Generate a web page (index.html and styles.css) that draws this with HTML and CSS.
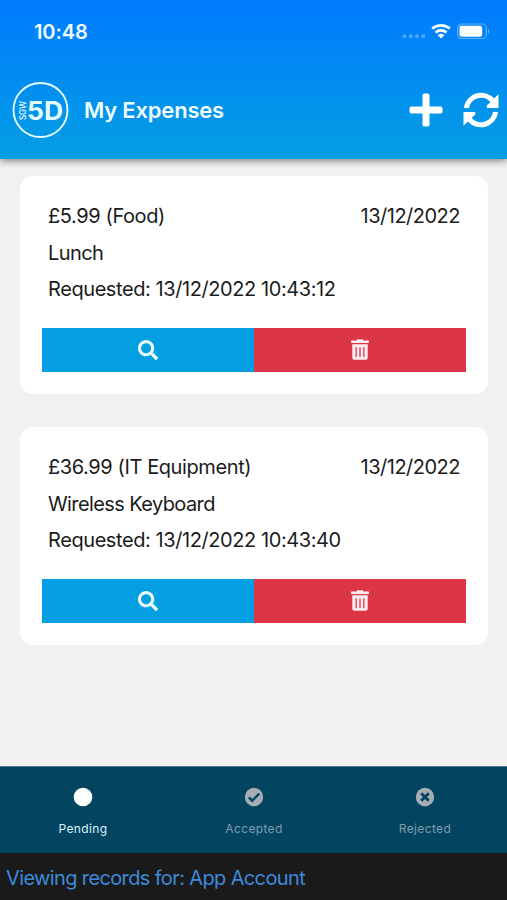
FILE: index.html
```html
<!DOCTYPE html>
<html lang="en">
<head>
<meta charset="utf-8">
<title>My Expenses</title>
<link rel="stylesheet" href="styles.css">
</head>
<body>
<svg class="defs" aria-hidden="true">
  <symbol id="search" viewBox="0 0 512 512"><path d="M505 442.700 405.300 343c-4.500-4.500-10.600-7-17-7H372c27.600-35.300 44-79.700 44-128C416 93.100 322.900 0 208 0S0 93.100 0 208s93.100 208 208 208c48.300 0 92.700-16.400 128-44v16.300c0 6.400 2.500 12.500 7 17l99.700 99.700c9.400 9.400 24.600 9.400 33.900 0l28.300-28.300c9.400-9.400 9.400-24.600.1-34zM208 336c-70.700 0-128-57.200-128-128 0-70.700 57.200-128 128-128 70.700 0 128 57.200 128 128 0 70.700-57.200 128-128 128z"/></symbol>
  <symbol id="trash" viewBox="0 0 448 512"><path d="M32 464a48 48 0 0 0 48 48h288a48 48 0 0 0 48-48V128H32zm272-256a16 16 0 0 1 32 0v224a16 16 0 0 1-32 0zm-96 0a16 16 0 0 1 32 0v224a16 16 0 0 1-32 0zm-96 0a16 16 0 0 1 32 0v224a16 16 0 0 1-32 0zM432 32H312l-9.400-18.700A24 24 0 0 0 281.100 0H166.800a23.700 23.700 0 0 0-21.400 13.300L136 32H16A16 16 0 0 0 0 48v32a16 16 0 0 0 16 16h416a16 16 0 0 0 16-16V48a16 16 0 0 0-16-16z"/></symbol>
</svg>
<header class="header">
  <div class="status">
    <span class="time">10:48</span>
    <svg class="indicators" width="90" height="22" viewBox="0 0 90 22">
      <g fill="#fff" opacity=".3"><circle cx="4.500" cy="15.300" r="2"/><circle cx="10.800" cy="15.300" r="2"/><circle cx="17" cy="15.300" r="2"/><circle cx="23.300" cy="15.300" r="2"/></g>
      <g transform="translate(0 -1)">
        <g fill="none" stroke="#fff" stroke-width="2.700"><path d="M32.200 8.600a13.400 13.400 0 0 1 17.600 0"/><path d="M35.500 12.500a8.300 8.300 0 0 1 11 0"/></g>
        <path fill="#fff" d="m41 18.500-3.300-3.300a5 5 0 0 1 6.600 0z"/>
        <rect x="57.700" y="4" width="28.600" height="14.500" rx="4" fill="none" stroke="#fff" stroke-opacity=".4" stroke-width="1.200"/>
        <rect x="59.500" y="5.800" width="22.700" height="11" rx="2.200" fill="#fff"/>
        <path d="M88 8.700q2 2.500 0 5z" fill="#fff" opacity=".5"/>
      </g>
    </svg>
  </div>
  <div class="titlebar">
    <svg class="logo" width="58" height="58" viewBox="0 0 58 58">
      <circle cx="28.500" cy="29" r="27" fill="none" stroke="#e4fbff" stroke-width="1.900"/>
      <text class="logo-side" transform="translate(14.300 39) rotate(-90)" textLength="19" lengthAdjust="spacingAndGlyphs">SGW</text>
      <text class="logo-main" x="15" y="38.500" textLength="36" lengthAdjust="spacingAndGlyphs">5D</text>
    </svg>
    <h1 class="title">My Expenses</h1>
    <svg class="add" width="34" height="34" viewBox="0 0 34 34"><path fill="#fff" d="M15.500.5h3a2 2 0 0 1 2 2v11h11a2 2 0 0 1 2 2v3a2 2 0 0 1-2 2h-11v11a2 2 0 0 1-2 2h-3a2 2 0 0 1-2-2v-11h-11a2 2 0 0 1-2-2v-3a2 2 0 0 1 2-2h11v-11a2 2 0 0 1 2-2z"/></svg>
    <svg class="sync" width="36" height="36" viewBox="0 0 36 36"><g id="arc"><path fill="none" stroke="#fff" stroke-width="5.200" d="M3.400 16A14.900 14.900 0 0 1 29.500 8.500"/><path fill="#fff" d="M35.500 2.200V16H23.800v-2.500z"/></g><use href="#arc" transform="rotate(180 18 18)"/></svg>
  </div>
</header>
<main class="list">
  <article class="card">
    <div class="row"><span>£5.99 (Food)</span><span class="date">13/12/2022</span></div>
    <div class="row"><span>Lunch</span></div>
    <div class="row"><span class="requested">Requested: 13/12/2022 10:43:12</span></div>
    <div class="actions">
      <button class="view" aria-label="View"><svg width="20" height="20"><use href="#search"/></svg></button>
      <button class="delete" aria-label="Delete"><svg width="18" height="21"><use href="#trash"/></svg></button>
    </div>
  </article>
  <article class="card">
    <div class="row"><span>£36.99 (IT Equipment)</span><span class="date">13/12/2022</span></div>
    <div class="row"><span>Wireless Keyboard</span></div>
    <div class="row"><span class="requested">Requested: 13/12/2022 10:43:40</span></div>
    <div class="actions">
      <button class="view" aria-label="View"><svg width="20" height="20"><use href="#search"/></svg></button>
      <button class="delete" aria-label="Delete"><svg width="18" height="21"><use href="#trash"/></svg></button>
    </div>
  </article>
</main>
<nav class="tabs">
  <a class="tab active"><svg width="20" height="20" viewBox="0 0 20 20"><circle cx="10" cy="10" r="9.300" fill="#fff"/></svg><span>Pending</span></a>
  <a class="tab"><svg width="20" height="20" viewBox="0 0 20 20"><circle cx="10" cy="10" r="9.200" fill="#a6adb4"/><path d="m4.800 10.300 3.400 3.400 7-7" fill="none" stroke="#034560" stroke-width="2.400"/></svg><span>Accepted</span></a>
  <a class="tab"><svg width="20" height="20" viewBox="0 0 20 20"><circle cx="10" cy="10" r="9.200" fill="#a6adb4"/><path d="m6.200 6.200 7.600 7.600m0-7.600-7.600 7.600" fill="none" stroke="#034560" stroke-width="2.900"/></svg><span>Rejected</span></a>
</nav>
<footer class="footer">Viewing records for: App Account</footer>
</body>
</html>
```
FILE: styles.css
```css
* { box-sizing: border-box; }
body {
  margin: 0;
  height: 900px;
  display: flex;
  flex-direction: column;
  overflow: hidden;
  background: #f1f1f1;
  color: #1b1b1b;
  font: 20px/24px Inter, "Liberation Sans", sans-serif;
}
.defs { position: absolute; width: 0; height: 0; }
svg { display: block; flex: none; }
.header {
  height: 159px;
  flex: none;
  background: linear-gradient(#007bff, #049ee2);
  box-shadow: 0 2px 7px rgba(0, 0, 0, .45);
  color: #effcff;
}
.status {
  height: 62px;
  padding: 1px 17px 0 34px;
  display: flex;
  align-items: center;
  justify-content: space-between;
}
.time { font-size: 20px; font-weight: 600; letter-spacing: -.1px; }
.titlebar {
  height: 96px;
  padding: 0 8px 0 12px;
  display: flex;
  align-items: center;
}
.logo-side { font: 500 9px Inter, sans-serif; fill: #e4fbff; }
.logo-main { font: 700 25px Inter, sans-serif; fill: #e4fbff; }
.title { margin: 0 auto 0 14px; font-size: 22px; font-weight: 600; letter-spacing: -.2px; }
.sync { margin-left: 20px; }
.list {
  flex: 1;
  padding: 17px 19px 0 20px;
  display: flex;
  flex-direction: column;
  gap: 33px;
}
.card {
  height: 218px;
  padding: 22px 22px 0;
  border-radius: 13px;
  background: #fff;
}
.row {
  height: 36.500px;
  padding: 0 6px;
  display: flex;
  justify-content: space-between;
  align-items: center;
  white-space: nowrap;
  letter-spacing: -.4px;
}
.date { letter-spacing: -.5px; }
.requested { letter-spacing: -.42px; }
.row:nth-child(2) { letter-spacing: -.6px; }
.actions { display: flex; height: 44px; margin-top: 20px; }
.actions button {
  flex: 1;
  border: 0;
  padding: 0;
  display: flex;
  align-items: center;
  justify-content: center;
}
.view { background: #049ee2; fill: #e8fbff; }
.delete { background: #dc3545; fill: #ffecef; }
.tabs {
  height: 87px;
  flex: none;
  display: flex;
  background: #034560;
  border-top: 1px solid #4b7e94;
}
.tab {
  flex: none;
  padding-top: 20px;
  display: flex;
  flex-direction: column;
  align-items: center;
  gap: 13px;
  color: #7f9dab;
  font-size: 12px;
  line-height: 18px;
  letter-spacing: .35px;
}
.tab:first-child { width: 165px; }
.tab:nth-child(2) { width: 177px; }
.tab:nth-child(3) { width: 165px; }
.tab span { padding-left: 1px; }
.active { color: #d6f3fb; }
.footer {
  height: 47px;
  flex: none;
  padding: 0 6px;
  background: #1a1a1a;
  color: #3b8bdc;
  line-height: 50px;
  letter-spacing: -.63px;
}
```
